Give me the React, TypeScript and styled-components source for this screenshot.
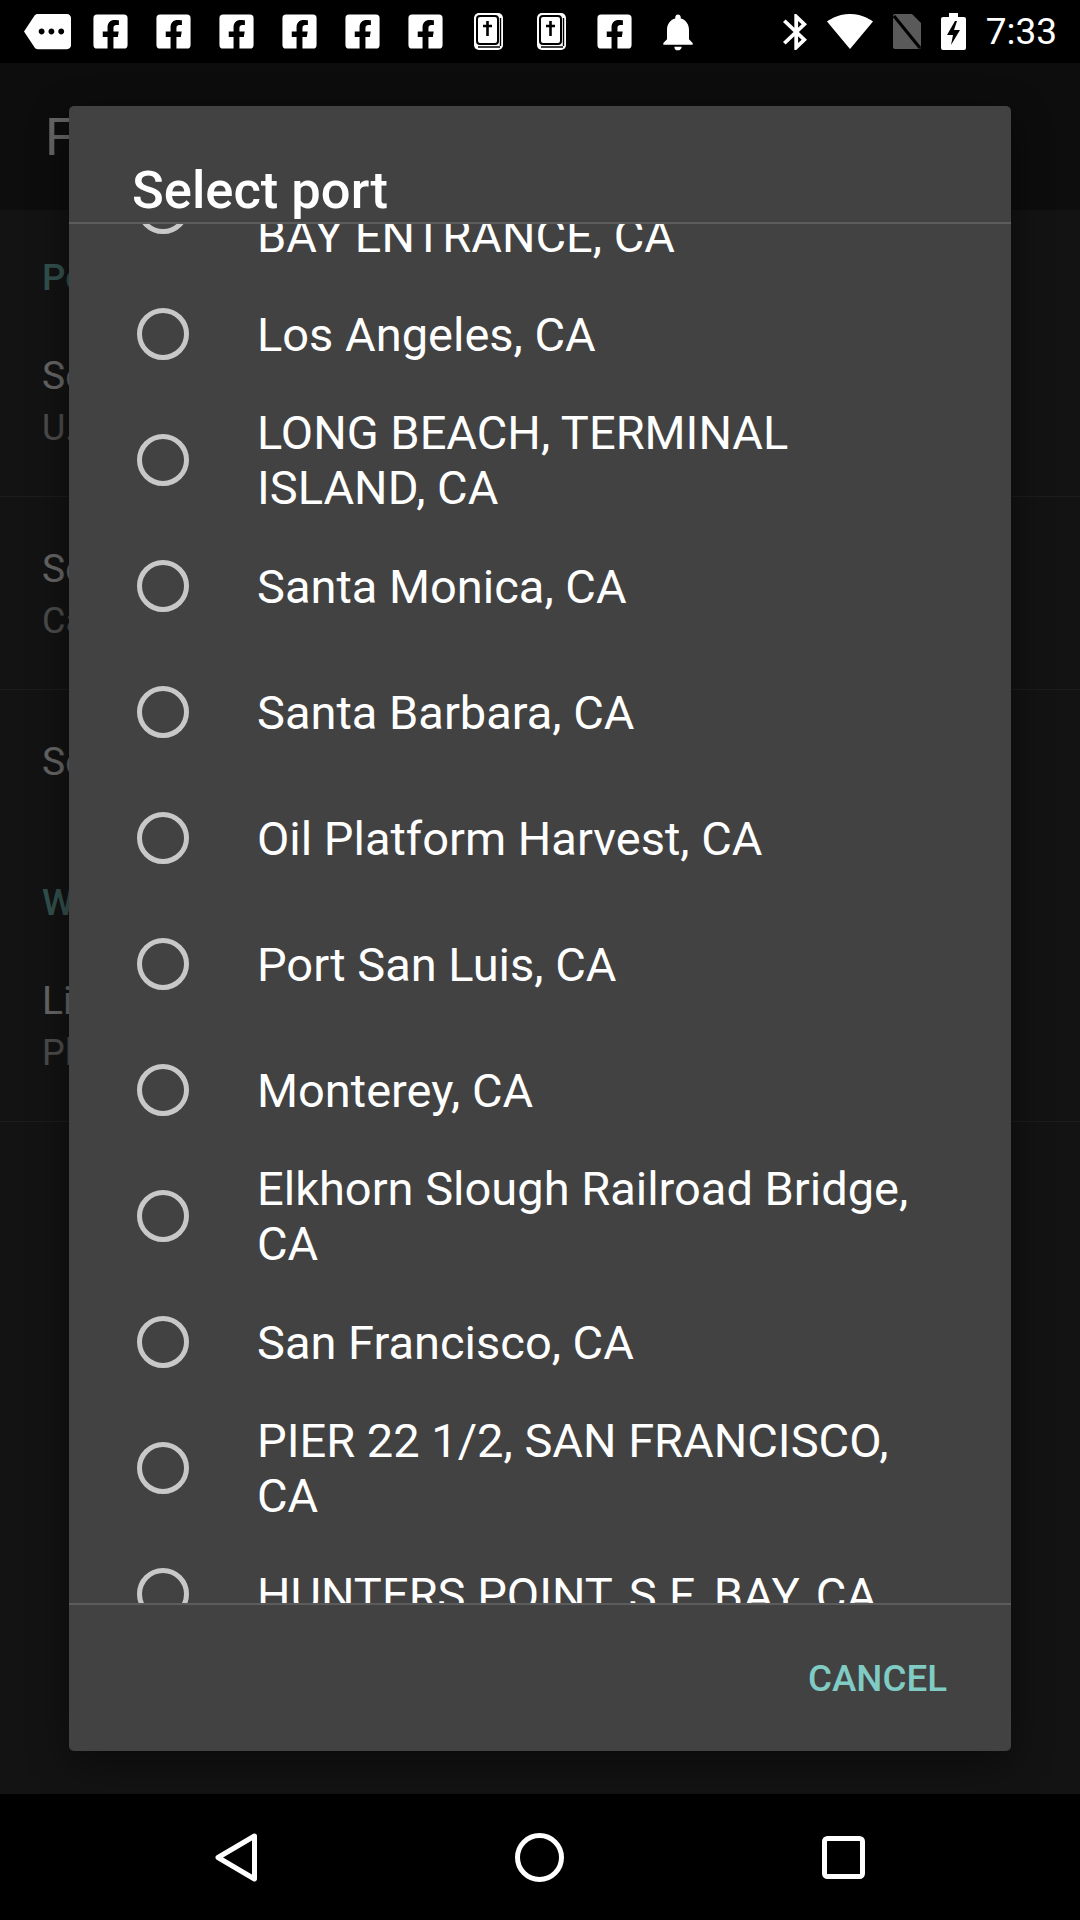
import React, { FC, useLayoutEffect, useRef } from 'react';
import styled, { createGlobalStyle } from 'styled-components';
import { MdMore, MdNotifications } from 'react-icons/md';
import { FaFacebookSquare } from 'react-icons/fa';

const GlobalStyle = createGlobalStyle`
	html, body {
		margin: 0;
		padding: 0;
		background: #000;
	}
	body {
		font-family: Roboto, 'Liberation Sans', sans-serif;
	}
`;

const Phone = styled.div`
	width: 1080px;
	height: 1920px;
	display: flex;
	flex-direction: column;
	background: #000;
	overflow: hidden;
`;

/* ---------- status bar ---------- */

const StatusBar = styled.div`
	height: 63px;
	flex: none;
	display: flex;
	align-items: center;
	justify-content: space-between;
	padding: 0 23px 0 16px;
	background: #000;
	color: #fff;
`;

const NotificationIcons = styled.div`
	display: flex;
	align-items: center;
`;

const IconSlot = styled.span`
	width: 63px;
	height: 63px;
	display: flex;
	align-items: center;
	justify-content: center;
	color: #fff;
`;

const SystemIcons = styled.div`
	display: flex;
	align-items: center;
	gap: 20px;
`;

const Clock = styled.span`
	font-size: 37px;
	line-height: 43px;
	color: #fff;
`;

const BibleIcon: FC = () => (
	<svg width="30" height="37" viewBox="0 0 30 37">
		<rect x="0" y="0" width="29" height="37" rx="5" fill="#fff" />
		<rect x="3" y="3" width="21" height="28" rx="3" fill="#fff" stroke="#000" strokeWidth="2" />
		<path d="M13.5 8v15M9 13h9" stroke="#000" strokeWidth="2.6" />
		<path d="M4 34h22M26.5 5v28" stroke="#000" strokeWidth="1.4" />
	</svg>
);

const BluetoothIcon: FC = () => (
	<svg width="24" height="36" viewBox="5 2 12.71 20" preserveAspectRatio="none">
		<path
			fill="#fff"
			d="M17.71 7.71L12 2h-1v7.59L6.41 5 5 6.41 10.59 12 5 17.59 6.41 19 11 14.41V22h1l5.71-5.71-4.3-4.29 4.3-4.29zM13 5.83l1.88 1.88L13 9.59V5.83zm1.88 10.46L13 18.17v-3.76l1.88 1.88z"
		/>
	</svg>
);

const WifiIcon: FC = () => (
	<svg width="46" height="35" viewBox="0.36 3 23.28 18.5" preserveAspectRatio="none">
		<path
			fill="#fff"
			d="M12.01 21.49L23.64 7c-.45-.34-4.93-4-11.64-4C5.28 3 .81 6.66.36 7l11.63 14.49.01.01.01-.01z"
		/>
	</svg>
);

const NoSimIcon: FC = () => (
	<svg width="28" height="35" viewBox="0 0 28 35">
		<path d="M2 0h17l9 9v24a2 2 0 0 1-2 2H2a2 2 0 0 1-2-2V2a2 2 0 0 1 2-2z" fill="#5a5a5a" />
		<path d="M1 2l26 32" stroke="#000" strokeWidth="3" />
	</svg>
);

const BatteryIcon: FC = () => (
	<svg width="25" height="37" viewBox="0 0 25 37">
		<path d="M8 0h9v4h6a2 2 0 0 1 2 2v29a2 2 0 0 1-2 2H2a2 2 0 0 1-2-2V6a2 2 0 0 1 2-2h6z" fill="#fff" />
		<path d="M14 8l-8 14h6l-2 10 9-15h-6l3-9z" fill="#000" />
	</svg>
);

/* ---------- underlying settings screen ---------- */

const Screen = styled.div`
	position: relative;
	flex: 1;
	display: flex;
	flex-direction: column;
	background: #303030;
`;

const AppBar = styled.div`
	height: 147px;
	flex: none;
	display: flex;
	align-items: center;
	padding: 0 45px;
	background: #212121;
`;

const AppBarTitle = styled.span`
	font-size: 52.5px;
	color: #fff;
`;

const CategoryHeader = styled.div`
	padding: 46px 42px 5px;
	font-size: 36.75px;
	line-height: 43px;
	font-weight: 500;
	color: #80cbc4;
`;

const PrefItem = styled.div<{ $single?: boolean }>`
	padding: 48px 42px ${(p) => (p.$single ? '49px' : '45px')};
	display: flex;
	flex-direction: column;
	gap: 6px;
`;

const PrefTitle = styled.span`
	font-size: 39px;
	line-height: 48px;
	color: #fff;
`;

const PrefSummary = styled.span`
	font-size: 36px;
	line-height: 45px;
	color: rgba(255, 255, 255, 0.7);
`;

const PrefDivider = styled.div`
	height: 1px;
	background: #4a4a4a;
`;

/* ---------- dialog ---------- */

const Scrim = styled.div`
	position: absolute;
	inset: 0;
	display: flex;
	align-items: center;
	justify-content: center;
	background: rgba(0, 0, 0, 0.6);
`;

const Dialog = styled.div`
	width: 942px;
	height: 1645px;
	display: flex;
	flex-direction: column;
	background: #424242;
	border-radius: 5px;
	box-shadow: 0 12px 40px rgba(0, 0, 0, 0.45);
	overflow: hidden;
`;

const DialogTitle = styled.h2`
	margin: 0;
	padding: 52px 63px 0;
	font-size: 52.5px;
	line-height: 64px;
	font-weight: 500;
	color: #fff;
`;

const ScrollEdge = styled.div`
	height: 2px;
	flex: none;
	background: #5c5c5c;
`;

const PortList = styled.div`
	flex: 1;
	min-height: 0;
	overflow-y: auto;
	scrollbar-width: none;
	&::-webkit-scrollbar {
		display: none;
	}
`;

const PortRow = styled.label`
	min-height: 126px;
	display: flex;
	align-items: center;
	gap: 68px;
	padding: 0 63px 0 68px;
	box-sizing: border-box;
`;

const Radio = styled.span`
	width: 52px;
	height: 52px;
	flex: none;
	box-sizing: border-box;
	border: 5px solid #c8c8c8;
	border-radius: 50%;
`;

const PortName = styled.span`
	flex: 1;
	font-size: 47px;
	line-height: 55px;
	color: #fff;
	white-space: pre-line;
`;

const DialogActions = styled.div`
	height: 146px;
	flex: none;
	display: flex;
	align-items: center;
	justify-content: flex-end;
	padding: 1px 64px 0 0;
	box-sizing: border-box;
`;

const TextButton = styled.button`
	border: none;
	background: none;
	padding: 0;
	font-family: inherit;
	font-size: 36.75px;
	font-weight: 500;
	line-height: 43px;
	color: #80cbc4;
`;

/* ---------- nav bar ---------- */

const NavBar = styled.div`
	height: 126px;
	flex: none;
	display: flex;
	align-items: center;
	justify-content: center;
	gap: 258px;
	background: #000;
`;

const ports = [
	'SAN DIEGO, SAN DIEGO\nBAY ENTRANCE, CA',
	'Los Angeles, CA',
	'LONG BEACH, TERMINAL ISLAND, CA',
	'Santa Monica, CA',
	'Santa Barbara, CA',
	'Oil Platform Harvest, CA',
	'Port San Luis, CA',
	'Monterey, CA',
	'Elkhorn Slough Railroad Bridge, CA',
	'San Francisco, CA',
	'PIER 22 1/2, SAN FRANCISCO, CA',
	'HUNTERS POINT, S.F. BAY, CA',
	'Alameda, CA',
	'Richmond, CA',
	'Point Reyes, CA',
];

const PortDialog: FC = () => {
	const listRef = useRef<HTMLDivElement>(null);

	// the list is shown scrolled a little past its first entry
	useLayoutEffect(() => {
		if (listRef.current) listRef.current.scrollTop = 79;
	}, []);

	return (
		<Dialog>
			<DialogTitle>Select port</DialogTitle>
			<ScrollEdge />
			<PortList ref={listRef}>
				{ports.map((name) => (
					<PortRow key={name}>
						<Radio />
						<PortName>{name}</PortName>
					</PortRow>
				))}
			</PortList>
			<ScrollEdge />
			<DialogActions>
				<TextButton>CANCEL</TextButton>
			</DialogActions>
		</Dialog>
	);
};

export default function App() {
	return (
		<Phone>
			<GlobalStyle />
			<StatusBar>
				<NotificationIcons>
					<IconSlot>
						<MdMore size={47} />
					</IconSlot>
					{[0, 1, 2, 3, 4, 5].map((i) => (
						<IconSlot key={i}>
							<FaFacebookSquare size={39} />
						</IconSlot>
					))}
					<IconSlot>
						<BibleIcon />
					</IconSlot>
					<IconSlot>
						<BibleIcon />
					</IconSlot>
					<IconSlot>
						<FaFacebookSquare size={39} />
					</IconSlot>
					<IconSlot>
						<MdNotifications size={44} />
					</IconSlot>
				</NotificationIcons>
				<SystemIcons>
					<BluetoothIcon />
					<WifiIcon />
					<NoSimIcon />
					<BatteryIcon />
					<Clock>7:33</Clock>
				</SystemIcons>
			</StatusBar>

			<Screen>
				<AppBar>
					<AppBarTitle>Fishing Forecast</AppBarTitle>
				</AppBar>
				<CategoryHeader>Port</CategoryHeader>
				<PrefItem>
					<PrefTitle>Select region</PrefTitle>
					<PrefSummary>U.S. West Coast</PrefSummary>
				</PrefItem>
				<PrefDivider />
				<PrefItem>
					<PrefTitle>Select state</PrefTitle>
					<PrefSummary>California</PrefSummary>
				</PrefItem>
				<PrefDivider />
				<PrefItem $single>
					<PrefTitle>Select port</PrefTitle>
				</PrefItem>
				<CategoryHeader>Weather</CategoryHeader>
				<PrefItem>
					<PrefTitle>Live conditions</PrefTitle>
					<PrefSummary>Please select a port first</PrefSummary>
				</PrefItem>
				<PrefDivider />

				<Scrim>
					<PortDialog />
				</Scrim>
			</Screen>

			<NavBar>
				<svg width="42" height="49" viewBox="0 0 42 49">
					<path d="M39.5 3L3 24.5 39.5 46z" fill="none" stroke="#fff" strokeWidth="5" strokeLinejoin="round" />
				</svg>
				<svg width="49" height="49" viewBox="0 0 49 49">
					<circle cx="24.5" cy="24.5" r="22" fill="none" stroke="#fff" strokeWidth="5" />
				</svg>
				<svg width="43" height="43" viewBox="0 0 43 43">
					<rect x="2.5" y="2.5" width="38" height="38" rx="3" fill="none" stroke="#fff" strokeWidth="5" />
				</svg>
			</NavBar>
		</Phone>
	);
}
